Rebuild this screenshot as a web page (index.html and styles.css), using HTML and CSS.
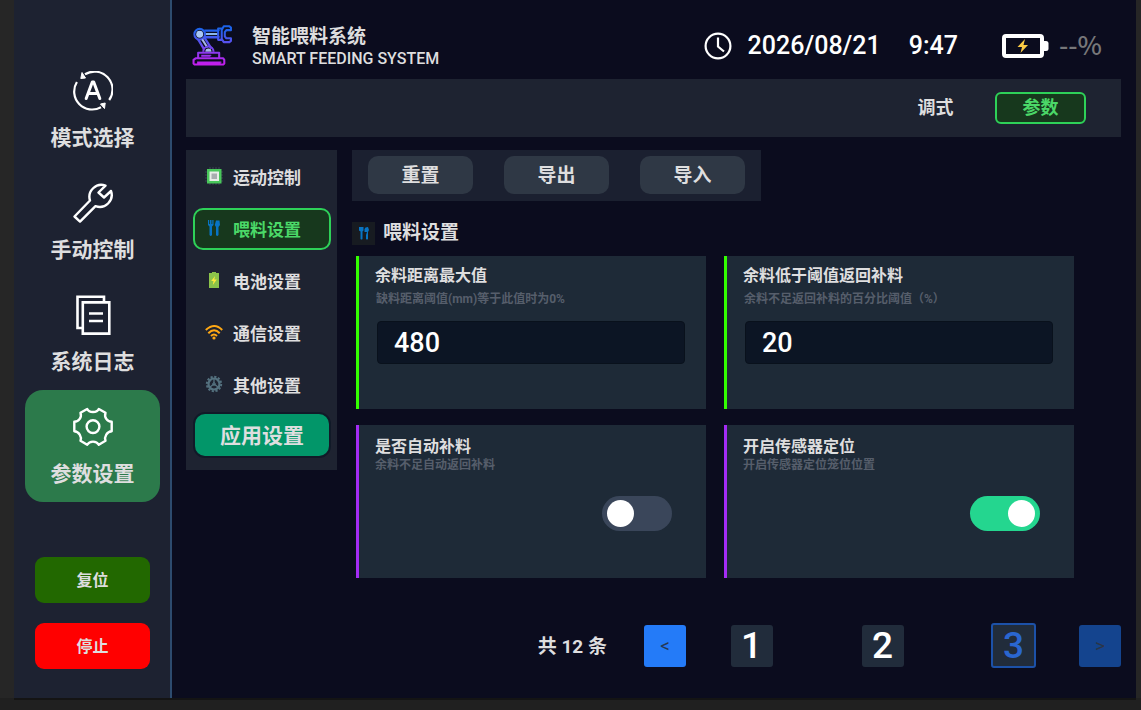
FILE: index.html
```html
<!DOCTYPE html>
<html lang="zh-CN">
<head>
<meta charset="utf-8">
<meta name="viewport" content="width=device-width, initial-scale=1">
<title>智能喂料系统</title>
<link rel="stylesheet" href="styles.css">
</head>
<body>
<div class="screen">
  <aside class="sidebar">
    <nav class="modes" aria-label="主导航">
      <button class="mode" type="button">
        <svg class="mode-icon" viewBox="0 0 40 40" fill="none" stroke="#fff" stroke-width="2.2">
          <path d="M12 3.300A18 18 0 0 1 36.200 29M3.900 11A18 18 0 0 0 28 36.200"/>
          <path d="M9 1.500 7.800 7.500 12.500 7zM31.500 37.500 32.200 32 27.500 33z" fill="#fff" stroke-width="1"/>
          <path d="M13.200 27.500 19.300 11h1.400l6.100 16.500M15.500 22.500h9" stroke-width="3" stroke-linecap="round" stroke-linejoin="round"/>
        </svg>
        <span>模式选择</span>
      </button>
      <button class="mode" type="button">
        <svg class="mode-icon" viewBox="0 0 40 40" fill="none" stroke="#fff" stroke-width="2.400" stroke-linejoin="round">
          <path d="M32.500 2.600A12 12 0 0 0 17 17.500L1.500 33.500 7 38.600 22.500 23.200A12 12 0 0 0 38 8L31 14.500 25.500 9.500z"/>
        </svg>
        <span>手动控制</span>
      </button>
      <button class="mode" type="button">
        <svg class="mode-icon" viewBox="0 0 40 40" fill="none" stroke="#fff" stroke-width="2.600">
          <path d="M9 33H4.500V1.800H31V7"/>
          <path d="M9.800 7.400h26.500v31.200H9.800zM16 18.500h14M16 26h14"/>
        </svg>
        <span>系统日志</span>
      </button>
      <button class="mode mode-active" type="button" aria-current="page">
        <svg class="mode-icon" viewBox="0 0 40 40" fill="none" stroke="#fff" stroke-width="2.400" stroke-linejoin="round">
          <path d="M14.200 2 C16 6 24 6 25.800 2 L32.500 5.800 C31 10 34 14.600 38.700 14.800 V24.200 C34 24.600 31 29.500 32.500 33.800 L25.800 37.800 C23.500 33.500 16.500 33.500 14.200 37.800 L7.500 33.800 C9 29.500 6 24.600 1.300 24.200 V14.800 C6 14.600 9 10 7.500 5.800Z"/>
          <circle cx="20" cy="19.600" r="6.400"/>
        </svg>
        <span>参数设置</span>
      </button>
    </nav>
    <div class="commands">
      <button class="command reset" type="button">复位</button>
      <button class="command stop" type="button">停止</button>
    </div>
  </aside>

  <main class="main">
    <header class="header">
      <svg class="logo" viewBox="0 0 40 40" fill="none" stroke-width="2" stroke-linejoin="round">
        <defs>
          <linearGradient id="arm" gradientUnits="userSpaceOnUse" x1="0" y1="4" x2="0" y2="38">
            <stop offset="0" stop-color="#1c63ea"/><stop offset=".4" stop-color="#5b50ee"/><stop offset="1" stop-color="#c41eee"/>
          </linearGradient>
        </defs>
        <g stroke="url(#arm)">
          <path d="M12 5.500h14v.1M12 12h14v.1" stroke-width="2.400"/>
          <path d="M13 8.800h12" stroke="#8bb8ec" stroke-width="2"/>
          <path d="M25.500 3.500h3.500v11h-3.500zM29 5 31 1.300h5.500l1.500 1.200v2.500h-4.500l-1.500 2v4l1.500 2H38v2.500l-1.500 1.200H31L29 13.500"/>
          <circle cx="7.500" cy="9" r="5.200"/>
          <circle cx="7.500" cy="9" r="3.400" fill="#a9c8f5" stroke="none"/>
          <path d="M6 14 12 24M12 12l7 11" stroke-width="2.200"/>
          <path d="M10 14l5 8" stroke="#a8b6e8"/>
          <path d="M11 26a5 5 0 0 1 10 0"/>
          <path d="M13 26a3 3 0 0 1 6 0z" fill="#a8b6e8" stroke="none"/>
          <path d="M6 32v-5h20.500v5M3.500 32.500h27l1 1.500v3.500l-1 1h-28l-1-1V34zM9 30h9v.1M5 36.500h23v.1"/>
        </g>
      </svg>
      <div class="brand">
        <h1 class="brand-name">智能喂料系统</h1>
        <p class="brand-sub">SMART FEEDING SYSTEM</p>
      </div>
      <svg class="clock" viewBox="0 0 28 28" fill="none" stroke="#fff" stroke-width="2.200">
        <circle cx="14" cy="14" r="12.400"/><path d="M14 5.500V14.500L20 19.500"/>
      </svg>
      <time class="date">2026/08/21</time>
      <time class="time">9:47</time>
      <svg class="battery" viewBox="0 0 47 24">
        <rect x="2" y="2" width="38" height="20" rx="2" fill="none" stroke="#fff" stroke-width="4"/>
        <path d="M41 7h3q2.500 0 2.500 2.500v5Q46.500 17 44 17h-3z" fill="#fff"/>
        <path d="M23 5 15.500 13H20l-1.500 6L26 11H21.500z" fill="#fccb45"/>
      </svg>
      <span class="charge">--%</span>
    </header>

    <nav class="tabs" aria-label="页面">
      <button class="tab" type="button">调式</button>
      <button class="tab tab-active" type="button">参数</button>
    </nav>

    <div class="content">
      <div class="side">
        <div class="menu">
          <button class="menu-item" type="button">
            <svg class="menu-icon" viewBox="0 0 18 18">
              <path d="M5 0v18M8 0v18M11 0v18M14 0v18M0 5h18M0 8h18M0 11h18M0 14h18" stroke="#3a4452" stroke-width="1"/>
              <rect x="2" y="2" width="14.500" height="14.500" fill="#49c75b"/><rect x="4.500" y="4.500" width="9.500" height="9.500" fill="#e8eee8"/><rect x="6.500" y="6.500" width="5.500" height="5.500" fill="#a9aeb0"/>
            </svg>
            <span>运动控制</span>
          </button>
          <button class="menu-item menu-active" type="button">
            <svg class="menu-icon" viewBox="0 0 18 18" fill="#0874c4">
              <path d="M3 1h1.200v4h.8V1h1.500v4h.8V1h1.200v5L7 7.500V16q-1.300 2-2.500 0V7.500L3 6zM11 1.500h3.500L15 6l-1.500 2V16q-1.300 2-2.500 0V8L9.800 6z"/>
            </svg>
            <span>喂料设置</span>
          </button>
          <button class="menu-item" type="button">
            <svg class="menu-icon" viewBox="0 0 18 18">
              <path d="M4 2h3V1h4v1h3v15H4z" fill="#8bc34a"/><path d="M10 5 6.200 10H8.500L7.800 14 11.800 8.500H9.300z" fill="#ffeb3b"/>
            </svg>
            <span>电池设置</span>
          </button>
          <button class="menu-item" type="button">
            <svg class="menu-icon" viewBox="0 0 18 18" fill="none" stroke="#ffa814" stroke-width="2">
              <path d="M.8 7Q9.500-1 17.200 7M3.300 10.200Q9.200 4.300 14.700 10.200M6 13Q9 10 12 13"/><circle cx="9" cy="15" r="1.600" fill="#ffa814" stroke="none"/>
            </svg>
            <span>通信设置</span>
          </button>
          <button class="menu-item" type="button">
            <svg class="menu-icon" viewBox="0 0 18 18" fill="none" stroke="#54717f">
              <circle cx="9" cy="9" r="7.200" stroke-width="2" stroke-dasharray="2.200 1.570"/>
              <circle cx="9" cy="9" r="5.500" stroke-width="2.200"/>
              <path d="M9 4v5M9 9l4 3M9 9l-4 3" stroke-width="1.300"/><circle cx="9" cy="9" r="1.300"/>
            </svg>
            <span>其他设置</span>
          </button>
        </div>
        <button class="apply" type="button">应用设置</button>
      </div>

      <section class="settings">
        <div class="toolbar">
          <button class="tool" type="button">重置</button>
          <button class="tool" type="button">导出</button>
          <button class="tool" type="button">导入</button>
        </div>
        <h2 class="section-title">
          <span class="section-badge">
            <svg class="section-icon" viewBox="0 0 12 14" fill="#0874c4">
              <path d="M1 1h4.500v3.500L4.500 5.500V13q-1 1-2 0V5.500L1 4.500zM7.500 1.500 10 1l1 3-1 2V13q-1 1-2 0V9l1-3H6.500V3z"/>
            </svg>
          </span>
          喂料设置
        </h2>
        <div class="cards">
          <div class="card card-value">
            <label class="card-title" for="distance">余料距离最大值</label>
            <p class="card-note">缺料距离阈值(mm)等于此值时为0%</p>
            <input class="field" id="distance" type="text" inputmode="numeric" value="480">
          </div>
          <div class="card card-value">
            <label class="card-title" for="threshold">余料低于阈值返回补料</label>
            <p class="card-note">余料不足返回补料的百分比阈值（%）</p>
            <input class="field" id="threshold" type="text" inputmode="numeric" value="20">
          </div>
          <div class="card card-switch">
            <label class="card-title" for="refill">是否自动补料</label>
            <p class="card-note">余料不足自动返回补料</p>
            <input class="switch" id="refill" type="checkbox" role="switch">
          </div>
          <div class="card card-switch">
            <label class="card-title" for="sensor">开启传感器定位</label>
            <p class="card-note">开启传感器定位笼位位置</p>
            <input class="switch" id="sensor" type="checkbox" role="switch" checked>
          </div>
        </div>
      </section>
    </div>

    <nav class="pager" aria-label="分页">
      <span class="total">共 12 条</span>
      <button class="step" type="button" aria-label="上一页">&lt;</button>
      <div class="pages">
        <button class="page" type="button">1</button>
        <button class="page" type="button">2</button>
        <button class="page page-current" type="button" aria-current="page">3</button>
      </div>
      <button class="step step-off" type="button" aria-label="下一页" disabled>&gt;</button>
    </nav>
  </main>
</div>
</body>
</html>
```
FILE: styles.css
```css
* {
  box-sizing: border-box;
}

body {
  margin: 0;
  min-height: 100vh;
  display: flex;
  padding: 0 5px 12px 14px;
  background: linear-gradient(#262626, #262626) no-repeat 0 0 / 100% calc(100% - 12px), #202020;
  color: #dededf;
  font-family: Roboto, "Noto Sans CJK SC", sans-serif;
  font-weight: 700;
}

button,
input {
  margin: 0;
  padding: 0;
  border: 0;
  color: inherit;
  font: inherit;
}

h1,
h2,
p {
  margin: 0;
  font-weight: 700;
}

.screen {
  flex: 1;
  display: flex;
  background: #0b0c1e;
  box-shadow: 0 2px #141414;
}

.sidebar {
  width: 158px;
  display: flex;
  flex-direction: column;
  justify-content: space-between;
  padding: 54px 10px 29px 11px;
  background: #1d2231;
  border-right: 2px solid #2d4b6e;
}

.modes {
  display: flex;
  flex-direction: column;
}

.mode {
  height: 112px;
  display: flex;
  flex-direction: column;
  align-items: center;
  gap: 13px;
  padding-top: 17px;
  border-radius: 18px;
  background: none;
  font-size: 21px;
  line-height: 28px;
}

.mode-active {
  background: #2c7a4b;
}

.mode-icon {
  width: 40px;
  height: 40px;
}

.commands {
  display: flex;
  flex-direction: column;
  gap: 20px;
  padding: 0 10px;
}

.command {
  height: 46px;
  padding-bottom: 2px;
  border-radius: 9px;
  font-size: 16px;
}

.reset {
  background: #226800;
}

.stop {
  background: #f00;
}

.main {
  flex: 1;
  display: flex;
  flex-direction: column;
  padding: 0 15px 30px 14px;
}

.header {
  display: flex;
  align-items: center;
  height: 79px;
  padding: 12px 19px 0 6px;
}

.logo {
  width: 41px;
  height: 41px;
}

.brand {
  flex: 1;
  padding: 5px 0 0 19px;
}

.brand-name {
  font-size: 19px;
  line-height: 22px;
}

.brand-sub {
  font-size: 16px;
  font-weight: 500;
  line-height: 22px;
}

.clock {
  width: 28px;
  height: 28px;
  margin-right: 16px;
}

.date,
.time {
  font-size: 25px;
  font-weight: 500;
  line-height: 32px;
  color: #fff;
}

.date {
  margin-right: 28px;
}

.time {
  margin-right: 44px;
}

.battery {
  width: 47px;
  height: 24px;
  margin-right: 10px;
}

.charge {
  color: #777779;
  font-family: "Noto Sans CJK SC", sans-serif;
  font-size: 26px;
  font-weight: 500;
  line-height: 28px;
  padding-bottom: 4px;
}

.tabs {
  display: flex;
  justify-content: flex-end;
  gap: 14px;
  padding: 13px 35px;
  background: #1e2331;
}

.tab {
  width: 91px;
  height: 32px;
  border-radius: 6px;
  background: none;
  font-size: 18px;
  line-height: 28px;
}

.tab-active {
  border: 2px solid #2ed158;
  background: #17381d;
  color: #4bd868;
}

.content {
  display: flex;
  align-items: flex-start;
  gap: 15px;
  padding-top: 13px;
}

.side {
  width: 151px;
  display: flex;
  flex-direction: column;
  padding: 6px 6px 12px 7px;
  background: #1e2331;
}

.menu {
  display: flex;
  flex-direction: column;
  gap: 10px;
}

.menu-item {
  height: 42px;
  display: flex;
  align-items: center;
  gap: 10px;
  padding: 0 0 2px 10px;
  border: 2px solid transparent;
  border-radius: 10px;
  background: none;
  font-size: 17px;
}

.menu-active {
  border-color: #2ed158;
  background: #17381d;
  color: #4bd868;
}

.menu-icon {
  width: 18px;
  height: 18px;
}

.apply {
  height: 46px;
  margin-top: 6px;
  padding-bottom: 3px;
  border: 2px solid #111a28;
  border-radius: 12px;
  background: #029669;
  font-size: 21px;
}

.settings {
  flex: 1;
}

.toolbar {
  width: fit-content;
  display: flex;
  gap: 31px;
  padding: 6px 16px 7px;
  background: #1b2030;
}

.tool {
  width: 105px;
  height: 38px;
  padding-bottom: 3px;
  border-radius: 10px;
  background: #2f3845;
  font-size: 19px;
}

.section-title {
  display: flex;
  align-items: center;
  gap: 8px;
  padding: 19px 0 10px;
  font-size: 19px;
  line-height: 26px;
}

.section-badge {
  width: 23px;
  height: 23px;
  display: grid;
  place-items: center;
  background: #171b21;
}

.section-icon {
  width: 12px;
  height: 14px;
}

.cards {
  display: grid;
  grid-template-columns: 1fr 1fr;
  gap: 16px 18px;
  padding: 0 47px 0 4px;
}

.card {
  min-height: 153px;
  display: flex;
  flex-direction: column;
  padding: 9px 20px 0 16px;
  background: #1e2a37;
  border-left: 3px solid;
}

.card-value {
  border-color: #3f0;
}

.card-switch {
  padding: 11px 34px 0 16px;
  border-color: #a42cf5;
}

.card-title {
  font-size: 16px;
  line-height: 22px;
}

.card-note {
  color: #565e6b;
  font-size: 12px;
  line-height: 14px;
}

.card-value .card-note {
  padding: 5px 0 0 1px;
}

.field {
  width: calc(100% - 3px);
  height: 43px;
  margin: 15px 0 0 2px;
  padding: 0 16px;
  border: 1px solid #09111c;
  border-radius: 4px;
  background: #0c1524;
  color: #fff;
  font-size: 27px;
  font-weight: 500;
}

.switch {
  appearance: none;
  width: 70px;
  height: 35px;
  align-self: flex-end;
  margin-top: 24px;
  padding: 4px 5px;
  border-radius: 18px;
  background: #3a465a;
  display: flex;
}

.switch::before {
  content: "";
  width: 27px;
  height: 27px;
  border-radius: 50%;
  background: #fff;
}

.switch:checked {
  justify-content: flex-end;
  background: #24d68f;
}

.pager {
  display: flex;
  align-items: center;
  justify-content: flex-end;
  margin-top: auto;
}

.total {
  margin-right: 37px;
  padding-bottom: 3px;
  font-size: 19px;
}

.step {
  width: 42px;
  height: 42px;
  border-radius: 3px;
  background: #247bf8;
  color: #263954;
  font-size: 19px;
  font-weight: 400;
}

.step-off {
  background: #14448e;
  color: #2a3547;
}

.pages {
  width: 393px;
  display: grid;
  grid-template-columns: 1fr 1fr 1fr;
  justify-items: center;
  align-items: center;
}

.page {
  width: 42px;
  height: 42px;
  border-radius: 3px;
  background: #212c3b;
  color: #fff;
  font-size: 37px;
  font-weight: 500;
  line-height: 42px;
}

.page-current {
  width: 45px;
  height: 45px;
  border: 2px solid #1c51a8;
  color: #2a66d0;
}
```
